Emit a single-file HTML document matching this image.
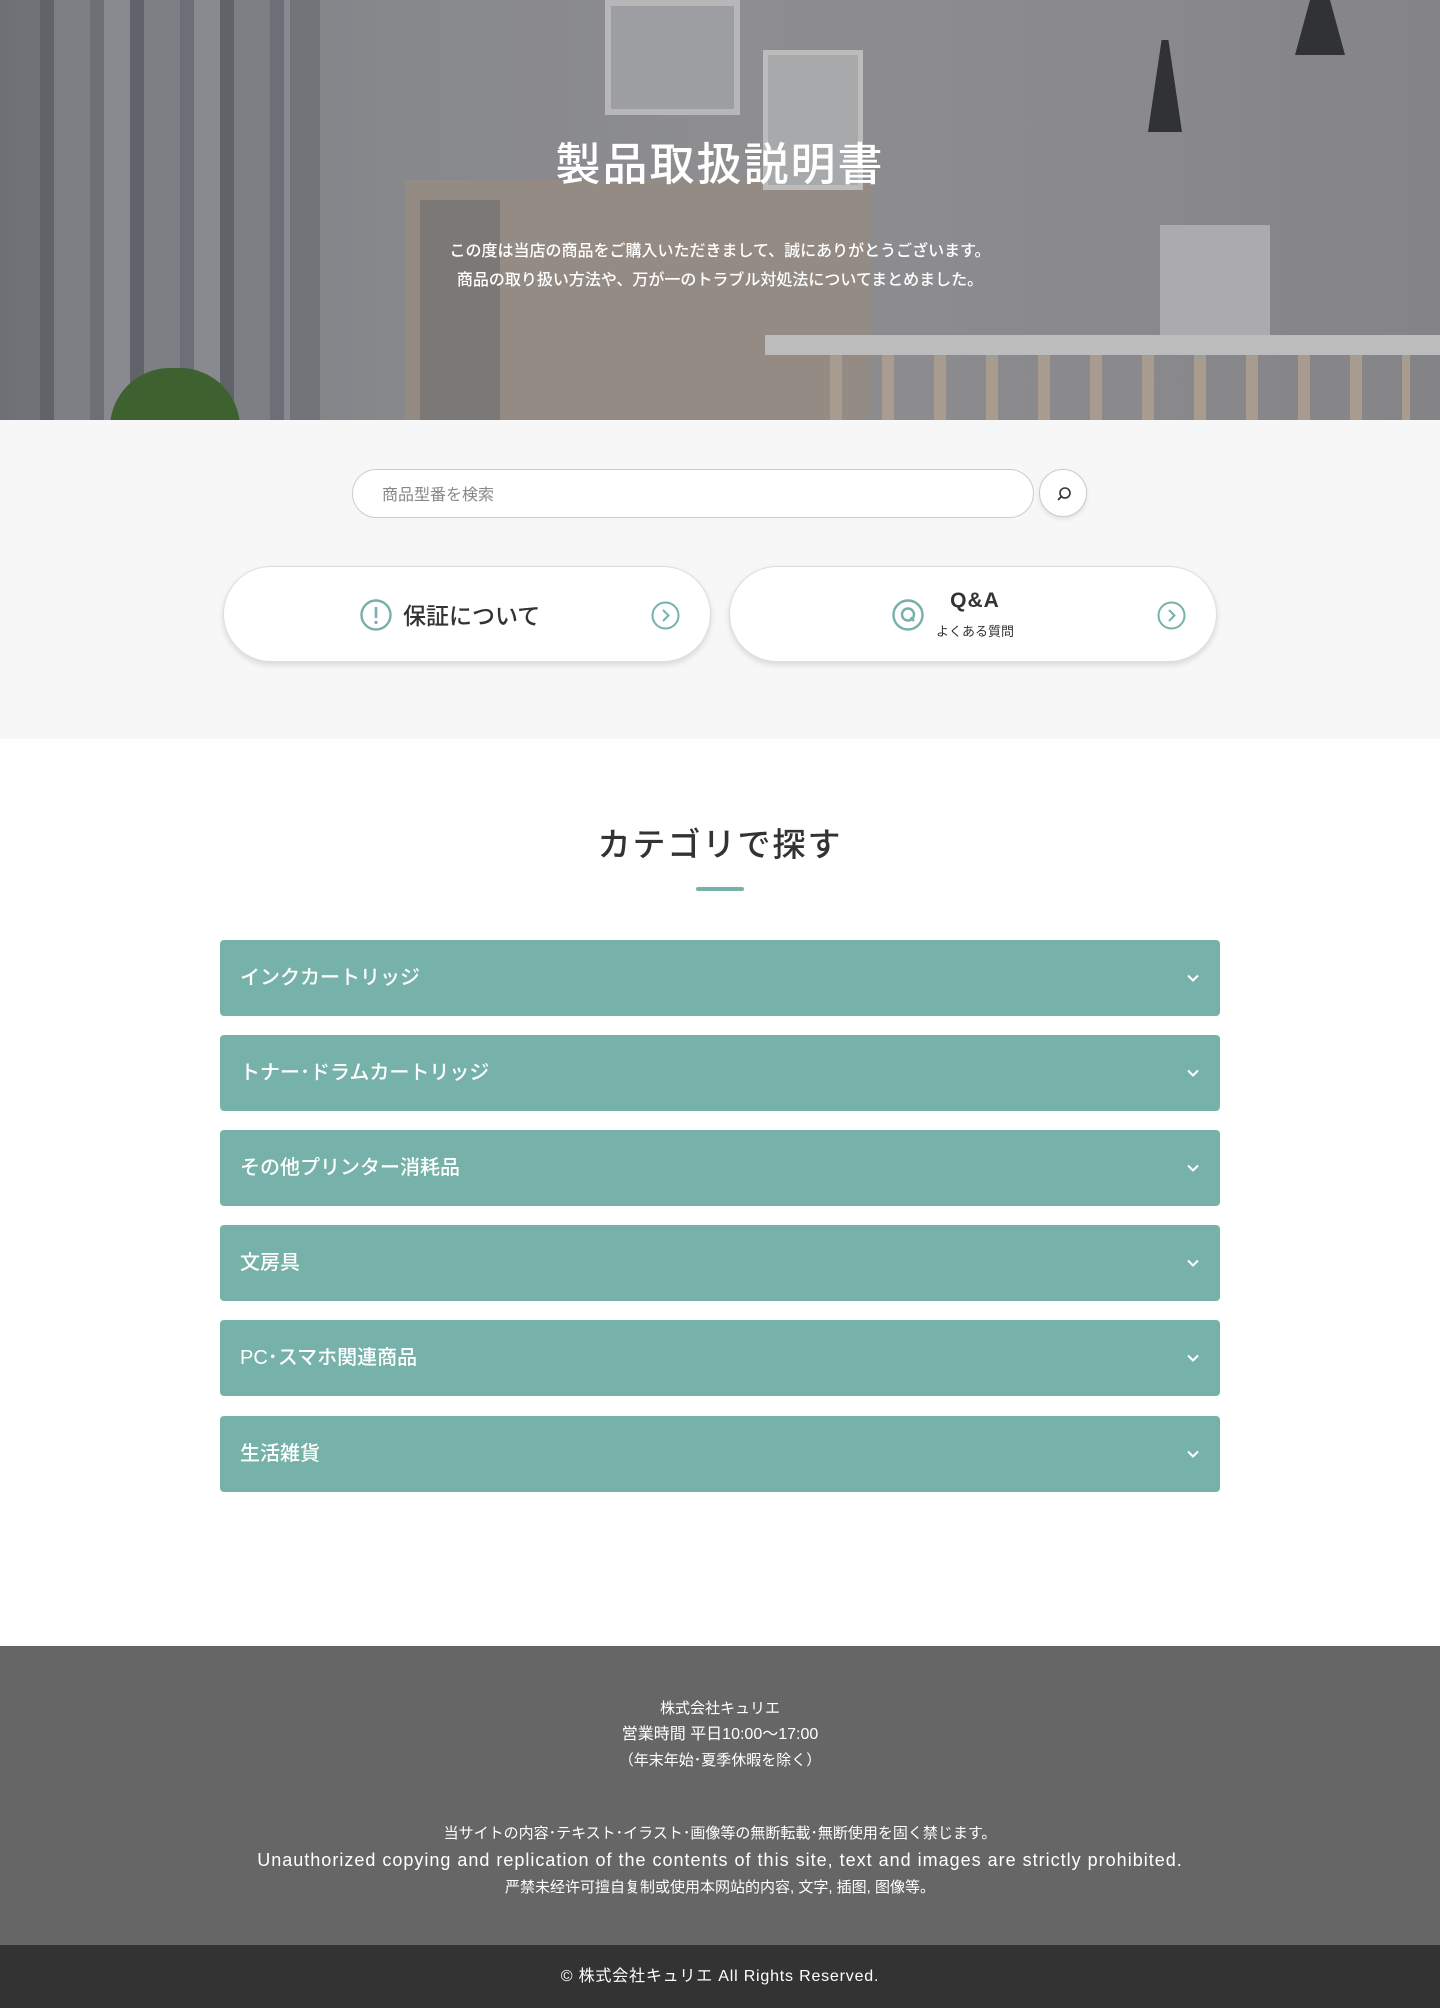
<!DOCTYPE html>
<html><head><meta charset="utf-8"><style>
*{margin:0;padding:0;box-sizing:border-box}
body{width:1440px;height:2008px;font-family:"Liberation Sans","Noto Sans CJK JP",sans-serif;background:#fff;color:#333;position:relative;overflow:hidden}
.abs{position:absolute}
.hero{position:absolute;left:0;top:0;width:1440px;height:420px;background:linear-gradient(90deg,#7a7c82 0%,#96989c 25%,#a0a0a2 50%,#9c9c9e 75%,#949496 100%);overflow:hidden}
.hero h1{position:absolute;top:128px;width:100%;text-align:center;color:#fff;font-size:45px;font-weight:500;letter-spacing:2px}
.hero p{position:absolute;width:100%;text-align:center;color:#fff;font-size:16px;line-height:29px;top:237px;font-weight:500}
.gray{position:absolute;left:0;top:420px;width:1440px;height:319px;background:#f7f7f7}
.search{position:absolute;left:352px;top:469px;width:682px;height:49px;border:1px solid #ccc;border-radius:25px;background:#fff;font-size:16px;color:#888;padding:11px 29px}
.sbtn{position:absolute;left:1039px;top:469px;width:48px;height:48px;border-radius:50%;background:#fff;border:1px solid #ccc;box-shadow:0 2px 4px rgba(0,0,0,.1)}
.card{position:absolute;top:566px;width:488px;height:96px;background:#fff;border-radius:48px;border:1px solid #ddd;box-shadow:0 3px 6px rgba(0,0,0,.12)}
.h2{position:absolute;top:818px;width:100%;text-align:center;font-size:33px;font-weight:500;letter-spacing:2px;color:#333}
.acc{position:absolute;left:220px;width:1000px;height:76px;background:#76b2a9;border-radius:4px;color:#fff;font-size:20px;font-weight:500;padding:0 20px;line-height:76px}
.acc svg{position:absolute;right:20px;top:31px}
.foot{position:absolute;left:0;top:1646px;width:1440px;height:299px;background:#666;color:#fff;text-align:center;font-size:15px}
.bar{position:absolute;left:0;top:1945px;width:1440px;height:63px;background:#333;color:#fff;text-align:center;font-size:16px;line-height:63px;letter-spacing:.8px}
</style></head><body>
<div class="hero">
 <div class="abs" style="left:40px;top:0;width:250px;height:420px;background:repeating-linear-gradient(90deg,#6a6c74 0 14px,#8c8e94 14px 50px,#787a82 50px 64px,#9a9ca2 64px 90px)"></div>
 <div class="abs" style="left:290px;top:0;width:30px;height:420px;background:#7d7f85"></div>
 <div class="abs" style="left:405px;top:180px;width:465px;height:240px;background:#a89d94"></div>
 <div class="abs" style="left:420px;top:200px;width:80px;height:220px;background:#8a8582"></div>
 <div class="abs" style="left:605px;top:0;width:135px;height:115px;background:#b3b4b7;border:6px solid #d2d2d2"></div>
 <div class="abs" style="left:763px;top:50px;width:100px;height:140px;background:#c0c1c3;border:5px solid #d8d8d8"></div>
 <div class="abs" style="left:765px;top:335px;width:675px;height:20px;background:#d8d8d8"></div>
 <div class="abs" style="left:790px;top:355px;width:620px;height:65px;background:repeating-linear-gradient(90deg,transparent 0 40px,#c0b1a2 40px 52px)"></div>
 <div class="abs" style="left:1160px;top:225px;width:110px;height:110px;background:#c4c4c6"></div>
 <div class="abs" style="left:110px;top:368px;width:130px;height:60px;border-radius:60px 60px 0 0;background:#3d6b2c"></div>
 <div class="abs" style="left:1148px;top:40px;width:34px;height:92px;background:#2f3032;clip-path:polygon(40% 0,60% 0,100% 100%,0 100%)"></div>
 <div class="abs" style="left:1295px;top:0;width:50px;height:55px;background:#2f3032;clip-path:polygon(30% 0,70% 0,100% 100%,0 100%)"></div>
 <div class="abs" style="left:0;top:0;width:1440px;height:420px;background:rgba(60,60,65,.18)"></div>
 <h1>製品取扱説明書</h1>
 <p>この度は当店の商品をご購入いただきまして、誠にありがとうございます。<br>商品の取り扱い方法や、万が一のトラブル対処法についてまとめました。</p>
</div>
<div class="gray"></div>
<div class="search">商品型番を検索</div>
<div class="sbtn"><svg width="48" height="48" viewBox="0 0 48 48"><circle cx="25" cy="23" r="5" fill="none" stroke="#333" stroke-width="1.6"/><line x1="21.5" y1="26.5" x2="18" y2="30" stroke="#333" stroke-width="1.8"/></svg></div>
<div class="card" style="left:223px">
 <svg class="abs" style="left:136px;top:32px" width="32" height="32" viewBox="0 0 32 32"><circle cx="16" cy="16" r="14.5" fill="none" stroke="#76b2a9" stroke-width="2.4"/><line x1="16" y1="8" x2="16" y2="19" stroke="#76b2a9" stroke-width="2.6"/><circle cx="16" cy="23.5" r="1.6" fill="#76b2a9"/></svg>
 <div class="abs" style="left:179px;top:30px;font-size:23px;font-weight:500;color:#333">保証について</div>
 <svg class="abs" style="left:427px;top:34px" width="29" height="29" viewBox="0 0 29 29"><circle cx="14.5" cy="14.5" r="13" fill="none" stroke="#76b2a9" stroke-width="2"/><path d="M12 9 L17.5 14.5 L12 20" fill="none" stroke="#76b2a9" stroke-width="2"/></svg>
</div>
<div class="card" style="left:729px">
 <svg class="abs" style="left:162px;top:32px" width="32" height="32" viewBox="0 0 32 32"><circle cx="16" cy="16" r="14.5" fill="none" stroke="#76b2a9" stroke-width="2.4"/><circle cx="16" cy="15.5" r="6" fill="none" stroke="#76b2a9" stroke-width="2.4"/><line x1="18.5" y1="18.5" x2="22" y2="22" stroke="#76b2a9" stroke-width="2.4"/></svg>
 <div class="abs" style="left:180px;top:22px;width:130px;text-align:center;font-size:21px;font-weight:bold;color:#333;letter-spacing:1px">Q&amp;A</div>
 <div class="abs" style="left:180px;top:54px;width:130px;text-align:center;font-size:13px;color:#333">よくある質問</div>
 <svg class="abs" style="left:427px;top:34px" width="29" height="29" viewBox="0 0 29 29"><circle cx="14.5" cy="14.5" r="13" fill="none" stroke="#76b2a9" stroke-width="2"/><path d="M12 9 L17.5 14.5 L12 20" fill="none" stroke="#76b2a9" stroke-width="2"/></svg>
</div>
<div class="h2">カテゴリで探す</div>
<div class="abs" style="left:696px;top:887px;width:48px;height:4px;background:#76b2a9;border-radius:2px"></div>
<div class="acc" style="top:940px">インクカートリッジ<svg width="14" height="14" viewBox="0 0 14 14"><path d="M2 4.5 L7 9.5 L12 4.5" fill="none" stroke="#fff" stroke-width="2"/></svg></div>
<div class="acc" style="top:1035px">トナー･ドラムカートリッジ<svg width="14" height="14" viewBox="0 0 14 14"><path d="M2 4.5 L7 9.5 L12 4.5" fill="none" stroke="#fff" stroke-width="2"/></svg></div>
<div class="acc" style="top:1130px">その他プリンター消耗品<svg width="14" height="14" viewBox="0 0 14 14"><path d="M2 4.5 L7 9.5 L12 4.5" fill="none" stroke="#fff" stroke-width="2"/></svg></div>
<div class="acc" style="top:1225px">文房具<svg width="14" height="14" viewBox="0 0 14 14"><path d="M2 4.5 L7 9.5 L12 4.5" fill="none" stroke="#fff" stroke-width="2"/></svg></div>
<div class="acc" style="top:1320px">PC･スマホ関連商品<svg width="14" height="14" viewBox="0 0 14 14"><path d="M2 4.5 L7 9.5 L12 4.5" fill="none" stroke="#fff" stroke-width="2"/></svg></div>
<div class="acc" style="top:1416px">生活雑貨<svg width="14" height="14" viewBox="0 0 14 14"><path d="M2 4.5 L7 9.5 L12 4.5" fill="none" stroke="#fff" stroke-width="2"/></svg></div>
<div class="foot">
 <div style="position:absolute;top:50px;width:100%;line-height:26px">株式会社キュリエ<br><span style="font-size:16px">営業時間 平日10:00～17:00</span><br>（年末年始･夏季休暇を除く）</div>
 <div style="position:absolute;top:175px;width:100%;line-height:26px">当サイトの内容･テキスト･イラスト･画像等の無断転載･無断使用を固く禁じます。<br><span style="font-size:18px;letter-spacing:1px">Unauthorized copying and replication of the contents of this site, text and images are strictly prohibited.</span><br>严禁未经许可擅自复制或使用本网站的内容, 文字, 插图, 图像等。</div>
</div>
<div class="bar">© 株式会社キュリエ All Rights Reserved.</div>
</body></html>
